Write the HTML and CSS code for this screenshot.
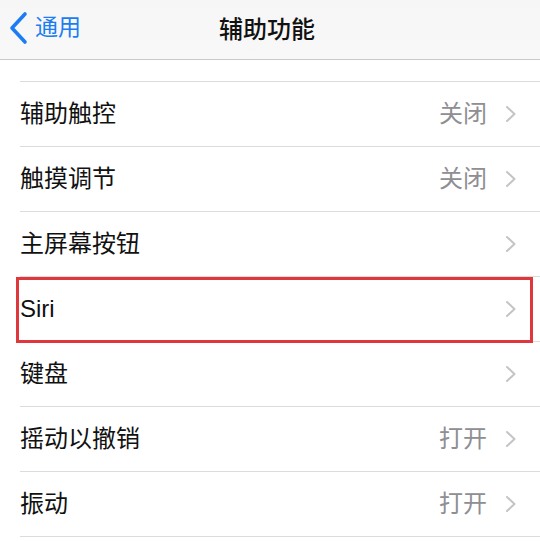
FILE: index.html
```html
<!DOCTYPE html>
<html lang="zh-CN">
<head>
<meta charset="utf-8">
<title>辅助功能</title>
<link rel="stylesheet" href="styles.css">
</head>
<body>
<header class="nav">
  <div class="back">
    <svg class="back-icon" width="22" height="34" viewBox="0 0 22 34"><polyline points="17,3 4,17 17,31" fill="none" stroke="#1b7cf4" stroke-width="3.6" stroke-linecap="round" stroke-linejoin="round"/></svg>
    <span class="back-text">通用</span>
  </div>
  <div class="title">辅助功能</div>
</header>
<main class="list">
  <div class="row row-partial"><div class="inner"></div></div>
  <div class="row"><div class="inner"><span class="label">辅助触控</span><span class="value">关闭</span><svg class="chev" width="12" height="18" viewBox="0 0 12 18"><polyline points="2,2 9.5,9 2,16" fill="none" stroke="#c4c4c7" stroke-width="2" stroke-linecap="round" stroke-linejoin="round"/></svg></div></div>
  <div class="row"><div class="inner"><span class="label">触摸调节</span><span class="value">关闭</span><svg class="chev" width="12" height="18" viewBox="0 0 12 18"><polyline points="2,2 9.5,9 2,16" fill="none" stroke="#c4c4c7" stroke-width="2" stroke-linecap="round" stroke-linejoin="round"/></svg></div></div>
  <div class="row"><div class="inner"><span class="label">主屏幕按钮</span><span class="value"></span><svg class="chev" width="12" height="18" viewBox="0 0 12 18"><polyline points="2,2 9.5,9 2,16" fill="none" stroke="#c4c4c7" stroke-width="2" stroke-linecap="round" stroke-linejoin="round"/></svg></div></div>
  <div class="row row-highlight"><div class="inner"><span class="label">Siri</span><span class="value"></span><svg class="chev" width="12" height="18" viewBox="0 0 12 18"><polyline points="2,2 9.5,9 2,16" fill="none" stroke="#c4c4c7" stroke-width="2" stroke-linecap="round" stroke-linejoin="round"/></svg></div></div>
  <div class="row"><div class="inner"><span class="label">键盘</span><span class="value"></span><svg class="chev" width="12" height="18" viewBox="0 0 12 18"><polyline points="2,2 9.5,9 2,16" fill="none" stroke="#c4c4c7" stroke-width="2" stroke-linecap="round" stroke-linejoin="round"/></svg></div></div>
  <div class="row"><div class="inner"><span class="label">摇动以撤销</span><span class="value">打开</span><svg class="chev" width="12" height="18" viewBox="0 0 12 18"><polyline points="2,2 9.5,9 2,16" fill="none" stroke="#c4c4c7" stroke-width="2" stroke-linecap="round" stroke-linejoin="round"/></svg></div></div>
  <div class="row"><div class="inner"><span class="label">振动</span><span class="value">打开</span><svg class="chev" width="12" height="18" viewBox="0 0 12 18"><polyline points="2,2 9.5,9 2,16" fill="none" stroke="#c4c4c7" stroke-width="2" stroke-linecap="round" stroke-linejoin="round"/></svg></div></div>
</main>
</body>
</html>
```

FILE: styles.css
```css
html, body {
  margin: 0;
  padding: 0;
  background: #ffffff;
  font-family: "Liberation Sans", "Noto Sans CJK SC", sans-serif;
  width: 540px;
  height: 541px;
  overflow: hidden;
}

.nav {
  box-sizing: border-box;
  height: 60px;
  padding-bottom: 4px;
  border-bottom: 1px solid #c9c9c9;
  background: linear-gradient(#f6f6f6, #f8f8f8);
  display: flex;
  align-items: center;
  position: relative;
}

.back {
  display: flex;
  align-items: center;
  padding-left: 8px;
  gap: 5px;
  color: #1b7cf4;
}

.back-icon {
  display: block;
}

.back-text {
  font-size: 23px;
  line-height: 1;
}

.title {
  box-sizing: border-box;
  position: absolute;
  left: 0;
  right: 0;
  top: 0;
  height: 59px;
  padding-bottom: 4px;
  display: flex;
  align-items: center;
  justify-content: center;
  font-size: 24px;
  font-weight: 500;
  color: #111111;
  padding-right: 6px;
}

.list {
  display: flex;
  flex-direction: column;
}

.row {
  position: relative;
}

.inner {
  margin-left: 20px;
  height: 64px;
  border-bottom: 1px solid #dcdcdc;
  display: flex;
  align-items: center;
  padding-right: 23px;
}

.row-partial .inner {
  height: 21px;
}

.label {
  font-size: 24px;
  color: #111111;
  flex: 1;
  line-height: 1;
}

.value {
  font-size: 24px;
  color: #8e8e93;
  line-height: 1;
  margin-right: 18px;
}

.chev {
  display: block;
}

.row-highlight::after {
  content: "";
  position: absolute;
  left: 16px;
  top: 0;
  width: 511px;
  height: 60px;
  border: 3px solid #e0373c;
  pointer-events: none;
}
```
